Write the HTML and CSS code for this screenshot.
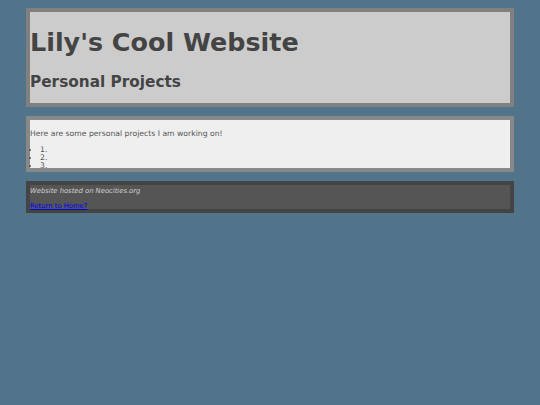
FILE: index.html
```html
<!DOCTYPE html>
<html>
<head>
<meta charset="utf-8">
<title>Lily's Cool Website</title>
<link rel="stylesheet" href="styles.css">
</head>
<body>
<div class="page">
  <header class="box header">
    <h1 class="title">Lily's Cool Website</h1>
    <h2 class="subtitle">Personal Projects</h2>
  </header>
  <main class="box content">
    <p class="intro">Here are some personal projects I am working on!</p>
    <ul class="projects">
      <li>1.</li>
      <li>2.</li>
      <li>3.</li>
    </ul>
  </main>
  <footer class="box footer">
    <p class="hosted">Website hosted on Neocities.org</p>
    <p class="back"><a href="#">Return to Home?</a></p>
  </footer>
</div>
</body>
</html>
```
FILE: styles.css
```css
html, body {
  margin: 0;
  padding: 0;
}
body {
  background: #52748a;
  font-family: "DejaVu Sans", Verdana, sans-serif;
  font-size: 7.7px;
  color: #555;
}
.page {
  width: 488px;
  margin: 0 auto;
  padding-top: 8px;
  display: flex;
  flex-direction: column;
  gap: 9px;
}
.box {
  border: 4px solid #808080;
}
.header {
  background: #cccccc;
  color: #444;
  padding: 15px 0 11px;
}
.title {
  margin: 0;
  font-size: 25.4px;
  line-height: 30px;
}
.subtitle {
  margin: 15px 0 0;
  font-size: 15.3px;
  line-height: 20px;
}
.content {
  background: #efefef;
  border-color: #888;
  padding: 9px 0 0;
}
.intro {
  margin: 0 0 8px;
  line-height: 9px;
}
.projects {
  margin: 0 0 -2px;
  padding-left: 10px;
  line-height: 8px;
}
.footer {
  background: #555;
  border-color: #444;
  padding: 2px 0 0;
  font-size: 6.8px;
}
.hosted {
  margin: 0;
  color: #d0d0d0;
  font-style: italic;
  line-height: 8px;
}
.back {
  margin: 7px 0 -1px;
  line-height: 8px;
}
.back a {
  color: #0000ee;
}
```
